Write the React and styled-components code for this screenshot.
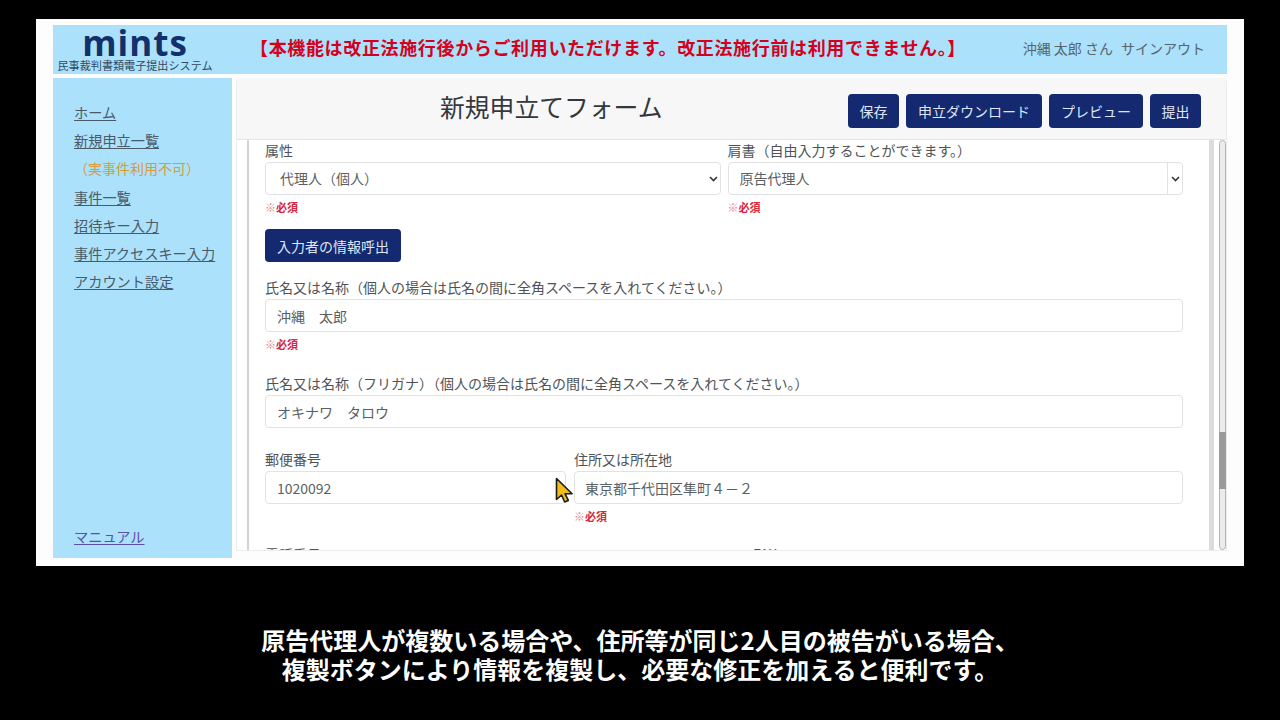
import React from "react";
import styled, { createGlobalStyle } from "styled-components";

const GlobalStyle = createGlobalStyle`
  html, body {
    margin: 0;
    height: 100%;
    background: #000;
    font-family: "Noto Sans CJK JP", "Noto Sans", sans-serif;
    overflow: hidden;
  }
  * { box-sizing: border-box; }
`;

const Stage = styled.div`
  width: 1280px;
  height: 720px;
  background: #000;
  padding: 19px 36px 0;
`;

const Screen = styled.div`
  position: relative;
  width: 1208px;
  height: 547px;
  background: #fdfdfd;
  padding: 6px 17px 8px;
  display: flex;
  flex-direction: column;
  gap: 4px;
`;

const Header = styled.header`
  height: 49px;
  background: #abe1fa;
  display: flex;
  align-items: center;
  flex-shrink: 0;
`;

const Logo = styled.div`
  width: 161px;
  margin-right: 36px;
  padding-left: 3px;
  display: flex;
  flex-direction: column;
  align-items: center;
`;

const LogoMark = styled.div`
  font-family: "Open Sans", sans-serif;
  font-weight: 700;
  font-size: 35px;
  line-height: 28px;
  letter-spacing: 1px;
  color: #12306b;
  margin-top: 1px;
`;

const LogoSub = styled.div`
  font-size: 11.1px;
  line-height: 12px;
  color: #33475f;
  white-space: nowrap;
  margin-top: 2px;
`;

const Notice = styled.div`
  font-size: 18px;
  letter-spacing: 0.65px;
  font-weight: 700;
  color: #d5001c;
  white-space: nowrap;
  margin-top: -6px;
`;

const UserBox = styled.div`
  margin-left: auto;
  padding-right: 22px;
  font-size: 14px;
  color: #56646e;
  display: flex;
  gap: 8px;
  white-space: nowrap;
  margin-top: -3px;
`;

const Body = styled.div`
  flex: 1;
  min-height: 0;
  display: flex;
  gap: 4px;
`;

const Sidebar = styled.nav`
  width: 179px;
  background: #abe1fa;
  padding: 25px 0 12px 21px;
  display: flex;
  flex-direction: column;
`;

const NavLink = styled.a`
  font-size: 14.2px;
  line-height: 19px;
  height: 28.2px;
  color: #4a5a68;
  text-decoration: underline;
  text-underline-offset: 2px;
  white-space: nowrap;
`;

const NavNote = styled.div`
  font-size: 14px;
  line-height: 19px;
  height: 28.2px;
  color: #d99a3e;
  white-space: nowrap;
`;

const ManualLink = styled(NavLink)`
  margin-top: auto;
  height: auto;
  color: #5a50a8;
`;

const Main = styled.main`
  flex: 1;
  min-width: 0;
  height: 473px;
  background: #fff;
  display: flex;
  flex-direction: column;
  border: 1px solid #ececec;
  border-top: 0;
  border-radius: 4px 4px 0 0;
`;

const TitleBar = styled.div`
  height: 62px;
  flex-shrink: 0;
  background: #f7f7f7;
  border-bottom: 1px solid #e4e4e4;
  display: flex;
  align-items: center;
  padding: 0 25px 0 203px;
`;

const Title = styled.h1`
  margin: 0 0 6px;
  font-size: 24.8px;
  font-weight: 400;
  color: #33383d;
  white-space: nowrap;
`;

const ButtonRow = styled.div`
  margin-left: auto;
  display: flex;
  gap: 7px;
  margin-top: 4px;
`;

const NavyButton = styled.button`
  height: 34px;
  padding: 0 ${({ $short }) => ($short ? 11.5 : 12)}px;
  background: #14296f;
  color: #dfe6f5;
  border: 0;
  border-radius: 4px;
  font-family: inherit;
  font-size: 14px;
  white-space: nowrap;
`;

const ScrollArea = styled.div`
  flex: 1;
  min-height: 0;
  overflow: hidden;
  display: flex;
`;

const Form = styled.div`
  width: 972px;
  margin-left: 10px;
  border-left: 2px solid #d2d2d2;
  border-right: 5px solid #dcdcdc;
  padding: 0 26px 0 16px;
`;

const Row = styled.div`
  display: flex;
  gap: ${({ $gap }) => $gap || 7}px;
`;

const Field = styled.div`
  flex: ${({ $width }) => ($width ? `0 0 ${$width}px` : 1)};
  min-width: 0;
  height: ${({ $height }) => $height}px;
`;

const Label = styled.div`
  font-size: 14px;
  line-height: 20px;
  height: 22px;
  color: #4f5358;
  white-space: nowrap;
`;

const Control = styled.div`
  height: 33px;
  background: #fff;
  border: 1px solid #e2e2e2;
  border-radius: 4px;
  padding-left: ${({ $pad }) => $pad || 11}px;
  display: flex;
  align-items: center;
  font-size: 14px;
  color: #5b5f63;
  white-space: nowrap;
`;

const SelectText = styled.span`
  margin-bottom: 2px;
`;

const Chevron = styled.span`
  margin-left: auto;
  height: 100%;
  width: ${({ $boxed }) => ($boxed ? 15 : 12)}px;
  display: flex;
  align-items: center;
  justify-content: center;
  border-left: ${({ $boxed }) => ($boxed ? "1px solid #e2e2e2" : "0")};
`;

const RequiredText = styled.div`
  font-size: 11px;
  font-weight: 700;
  line-height: 14px;
  margin-top: 5px;
  color: #d8263c;
  white-space: nowrap;
`;

const RequiredMark = styled.span`
  font-weight: 400;
  color: #e8808c;
`;

const CallButton = styled(NavyButton)`
  display: block;
  width: 136px;
  height: 33px;
  margin-bottom: 15px;
`;

const ClippedLabels = styled(Row)`
  height: 20px;
`;

const Scrollbar = styled.div`
  width: 7px;
  margin-left: 5px;
  background: #ececec;
  border: 1px solid #b4b4b4;
  border-radius: 4px;
  padding-top: 291px;
  flex-shrink: 0;
`;

const Thumb = styled.div`
  height: 57px;
  margin: 0 -1px;
  background: #9a9a9a;
`;

const Pointer = styled.svg`
  position: absolute;
  left: 519px;
  top: 458px;
`;

const Caption = styled.div`
  margin-top: 59px;
  text-align: center;
  color: #fff;
  font-size: 24px;
  font-weight: 700;
  line-height: 29px;
  white-space: nowrap;
`;

const chevron = (
  <svg width="9" height="6" viewBox="0 0 9 6">
    <path d="M1 1l3.5 3.5L8 1" fill="none" stroke="#33373b" strokeWidth="1.6" />
  </svg>
);

const navItems = ["招待キー入力", "事件アクセスキー入力", "アカウント設定"];

const Required = () => (
  <RequiredText>
    <RequiredMark>※</RequiredMark>必須
  </RequiredText>
);

export default function App() {
  return (
    <>
      <GlobalStyle />
      <Stage>
        <Screen>
          <Header>
            <Logo>
              <LogoMark>mints</LogoMark>
              <LogoSub>民事裁判書類電子提出システム</LogoSub>
            </Logo>
            <Notice>【本機能は改正法施行後からご利用いただけます。改正法施行前は利用できません。】</Notice>
            <UserBox>
              <span>沖縄 太郎 さん</span>
              <span>サインアウト</span>
            </UserBox>
          </Header>
          <Body>
            <Sidebar>
              <NavLink>ホーム</NavLink>
              <NavLink>新規申立一覧</NavLink>
              <NavNote>（実事件利用不可）</NavNote>
              <NavLink>事件一覧</NavLink>
              {navItems.map((item) => (
                <NavLink key={item}>{item}</NavLink>
              ))}
              <ManualLink>マニュアル</ManualLink>
            </Sidebar>
            <Main>
              <TitleBar>
                <Title>新規申立てフォーム</Title>
                <ButtonRow>
                  <NavyButton $short>保存</NavyButton>
                  <NavyButton>申立ダウンロード</NavyButton>
                  <NavyButton>プレビュー</NavyButton>
                  <NavyButton $short>提出</NavyButton>
                </ButtonRow>
              </TitleBar>
              <ScrollArea>
                <Form>
                  <Row>
                    <Field $height={89}>
                      <Label>属性</Label>
                      <Control $pad={14}>
                        <SelectText>代理人（個人）</SelectText>
                        <Chevron>{chevron}</Chevron>
                      </Control>
                      <Required />
                    </Field>
                    <Field $height={89}>
                      <Label>肩書（自由入力することができます。）</Label>
                      <Control>
                        <SelectText>原告代理人</SelectText>
                        <Chevron $boxed>{chevron}</Chevron>
                      </Control>
                      <Required />
                    </Field>
                  </Row>
                  <CallButton>入力者の情報呼出</CallButton>
                  <Field $height={96}>
                    <Label>氏名又は名称（個人の場合は氏名の間に全角スペースを入れてください。）</Label>
                    <Control>沖縄　太郎</Control>
                    <Required />
                  </Field>
                  <Field $height={76}>
                    <Label>氏名又は名称（フリガナ）（個人の場合は氏名の間に全角スペースを入れてください。）</Label>
                    <Control>オキナワ　タロウ</Control>
                  </Field>
                  <Row $gap={8}>
                    <Field $width={301} $height={95}>
                      <Label>郵便番号</Label>
                      <Control>1020092</Control>
                    </Field>
                    <Field $height={95}>
                      <Label>住所又は所在地</Label>
                      <Control $pad={10}>東京都千代田区隼町４－２</Control>
                      <Required />
                    </Field>
                  </Row>
                  <ClippedLabels>
                    <Field $width={481}>
                      <Label>電話番号</Label>
                    </Field>
                    <Field>
                      <Label>FAX</Label>
                    </Field>
                  </ClippedLabels>
                </Form>
                <Scrollbar>
                  <Thumb />
                </Scrollbar>
              </ScrollArea>
            </Main>
          </Body>
          <Pointer width="20" height="28" viewBox="0 0 20 28">
            <path
              d="M1.5 1.5v21l5-4.5 3.2 7 3.6-1.6-3.2-6.6h7z"
              fill="#f2bc1b"
              stroke="#1a1a1a"
              strokeWidth="1.6"
              strokeLinejoin="round"
            />
          </Pointer>
        </Screen>
        <Caption>
          原告代理人が複数いる場合や、住所等が同じ2人目の被告がいる場合、
          <br />
          複製ボタンにより情報を複製し、必要な修正を加えると便利です。
        </Caption>
      </Stage>
    </>
  );
}
